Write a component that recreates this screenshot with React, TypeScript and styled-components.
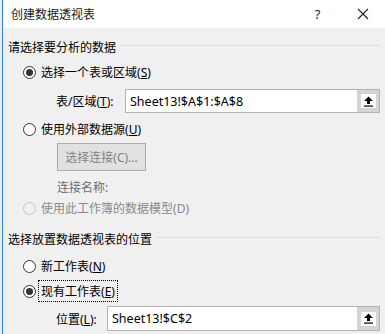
import React from "react";
import styled, { createGlobalStyle } from "styled-components";

const GlobalStyle = createGlobalStyle`
  html, body {
    margin: 0;
    padding: 0;
    background: #f3f3f3;
  }
  body {
    font-family: "Noto Sans", "Noto Sans CJK SC", sans-serif;
    font-size: 12px;
    color: #000;
  }
`;

const Screen = styled.div`
  display: flex;
  width: 385px;
  height: 334px;
  overflow: hidden;
`;

const Behind = styled.div`
  width: 2px;
  background: #ececec;
`;

const Window = styled.div`
  flex: 1;
  display: flex;
  flex-direction: column;
  border-left: 1px solid #2b85d8;
  background: #f0f0f0;
`;

const TitleBar = styled.div`
  height: 28px;
  display: flex;
  align-items: center;
  background: #fff;
  padding-left: 8px;
`;

const Title = styled.div`
  flex: 1;
  font-size: 12px;
  color: #1a1a1a;
`;

const TitleButton = styled.div`
  width: 45px;
  height: 28px;
  display: flex;
  align-items: center;
  justify-content: center;
  font-size: 13px;
  color: #222;
`;

const Body = styled.div`
  display: flex;
  flex-direction: column;
  padding: 0 5px 0 5px;
`;

const Row = styled.div<{ $gap: number; $h: number; $indent?: number }>`
  display: flex;
  align-items: center;
  margin-top: ${(p) => p.$gap}px;
  height: ${(p) => p.$h}px;
  padding-left: ${(p) => p.$indent ?? 0}px;
`;

const Header = styled.div`
  white-space: nowrap;
  padding-right: 5px;
`;

const Rule = styled.div`
  flex: 1;
  height: 1px;
  margin-top: -4px;
  background: #dcdcdc;
`;

const Circle = styled.span<{ $checked?: boolean; $disabled?: boolean }>`
  position: relative;
  box-sizing: border-box;
  width: 13px;
  height: 13px;
  border-radius: 50%;
  border: 1px solid ${(p) => (p.$disabled ? "#c4c4c4" : "#333")};
  background: ${(p) => (p.$disabled ? "#f0f0f0" : "#fff")};
  margin-right: 2px;
  flex-shrink: 0;
  &::after {
    content: "";
    display: ${(p) => (p.$checked ? "block" : "none")};
    position: absolute;
    left: 2px;
    top: 2px;
    width: 7px;
    height: 7px;
    border-radius: 50%;
    background: #333;
  }
`;

const RadioText = styled.span<{ $disabled?: boolean; $focus?: boolean }>`
  padding: 1px 2px;
  border: 1px ${(p) => (p.$focus ? "dotted #000" : "solid transparent")};
  color: ${(p) => (p.$disabled ? "#8a8a8a" : "#000")};
  white-space: nowrap;
`;

const Key = styled.span<{ $plain?: boolean }>`
  text-decoration: ${(p) => (p.$plain ? "none" : "underline")};
`;

const FieldLabel = styled.span<{ $w: number }>`
  width: ${(p) => p.$w}px;
  white-space: nowrap;
`;

const Input = styled.div`
  flex: 1;
  height: 100%;
  box-sizing: border-box;
  display: flex;
  align-items: center;
  background: #fff;
  border: 1px solid #b4b4b4;
`;

const InputText = styled.span`
  flex: 1;
  padding-left: 4px;
  font-size: 12.5px;
`;

const PickButton = styled.div`
  width: 22px;
  height: 100%;
  display: flex;
  align-items: center;
  justify-content: center;
  background: #d4d4d4;
`;

const PickIcon = styled.div`
  width: 15px;
  height: 14px;
  display: flex;
  align-items: center;
  justify-content: center;
  background: #fff;
`;

const GrayButton = styled.div`
  width: 89px;
  height: 100%;
  box-sizing: border-box;
  display: flex;
  align-items: center;
  justify-content: center;
  background: #e1e1e1;
  border: 1px solid #adadad;
  color: #838383;
`;

const Muted = styled.span`
  color: #6d6d6d;
`;

const Radio = ({
  label,
  hotkey,
  checked,
  disabled,
  focus,
}: {
  label: string;
  hotkey: string;
  checked?: boolean;
  disabled?: boolean;
  focus?: boolean;
}) => (
  <>
    <Circle $checked={checked} $disabled={disabled} />
    <RadioText $disabled={disabled} $focus={focus}>
      {label}(<Key $plain={disabled}>{hotkey}</Key>)
    </RadioText>
  </>
);

const UploadArrow = () => (
  <svg width="11" height="11" viewBox="0 0 11 11">
    <path d="M5.5 0.5 L10 5 L7 5 L7 8 L4 8 L4 5 L1 5 Z" fill="#000" />
    <rect x="1" y="9.5" width="9" height="1.2" fill="#000" />
  </svg>
);

const CloseIcon = () => (
  <svg width="12" height="12" viewBox="0 0 12 12">
    <path d="M1 1 L11 11 M11 1 L1 11" stroke="#222" strokeWidth="1.1" />
  </svg>
);

export default function App() {
  return (
    <>
      <GlobalStyle />
      <Screen>
        <Behind />
        <Window>
          <TitleBar>
            <Title>创建数据透视表</Title>
            <TitleButton>?</TitleButton>
            <TitleButton>
              <CloseIcon />
            </TitleButton>
          </TitleBar>
          <Body>
            <Row $gap={10} $h={18}>
              <Header>请选择要分析的数据</Header>
              <Rule />
            </Row>
            <Row $gap={7} $h={18} $indent={15}>
              <Radio label="选择一个表或区域" hotkey="S" checked />
            </Row>
            <Row $gap={8} $h={24} $indent={48}>
              <FieldLabel $w={69}>
                表/区域(<Key>T</Key>):
              </FieldLabel>
              <Input>
                <InputText>Sheet13!$A$1:$A$8</InputText>
                <PickButton>
                  <PickIcon>
                    <UploadArrow />
                  </PickIcon>
                </PickButton>
              </Input>
            </Row>
            <Row $gap={7} $h={18} $indent={15}>
              <Radio label="使用外部数据源" hotkey="U" />
            </Row>
            <Row $gap={5} $h={28} $indent={49}>
              <GrayButton>选择连接(C)...</GrayButton>
            </Row>
            <Row $gap={8} $h={16} $indent={49}>
              <Muted>连接名称:</Muted>
            </Row>
            <Row $gap={4} $h={18} $indent={15}>
              <Radio label="使用此工作簿的数据模型" hotkey="D" disabled />
            </Row>
            <Row $gap={13} $h={18}>
              <Header>选择放置数据透视表的位置</Header>
              <Rule />
            </Row>
            <Row $gap={9} $h={18} $indent={15}>
              <Radio label="新工作表" hotkey="N" />
            </Row>
            <Row $gap={6} $h={20} $indent={15}>
              <Radio label="现有工作表" hotkey="E" checked focus />
            </Row>
            <Row $gap={5} $h={25} $indent={48}>
              <FieldLabel $w={51}>
                位置(<Key>L</Key>):
              </FieldLabel>
              <Input>
                <InputText>Sheet13!$C$2</InputText>
                <PickButton>
                  <PickIcon>
                    <UploadArrow />
                  </PickIcon>
                </PickButton>
              </Input>
            </Row>
          </Body>
        </Window>
      </Screen>
    </>
  );
}
